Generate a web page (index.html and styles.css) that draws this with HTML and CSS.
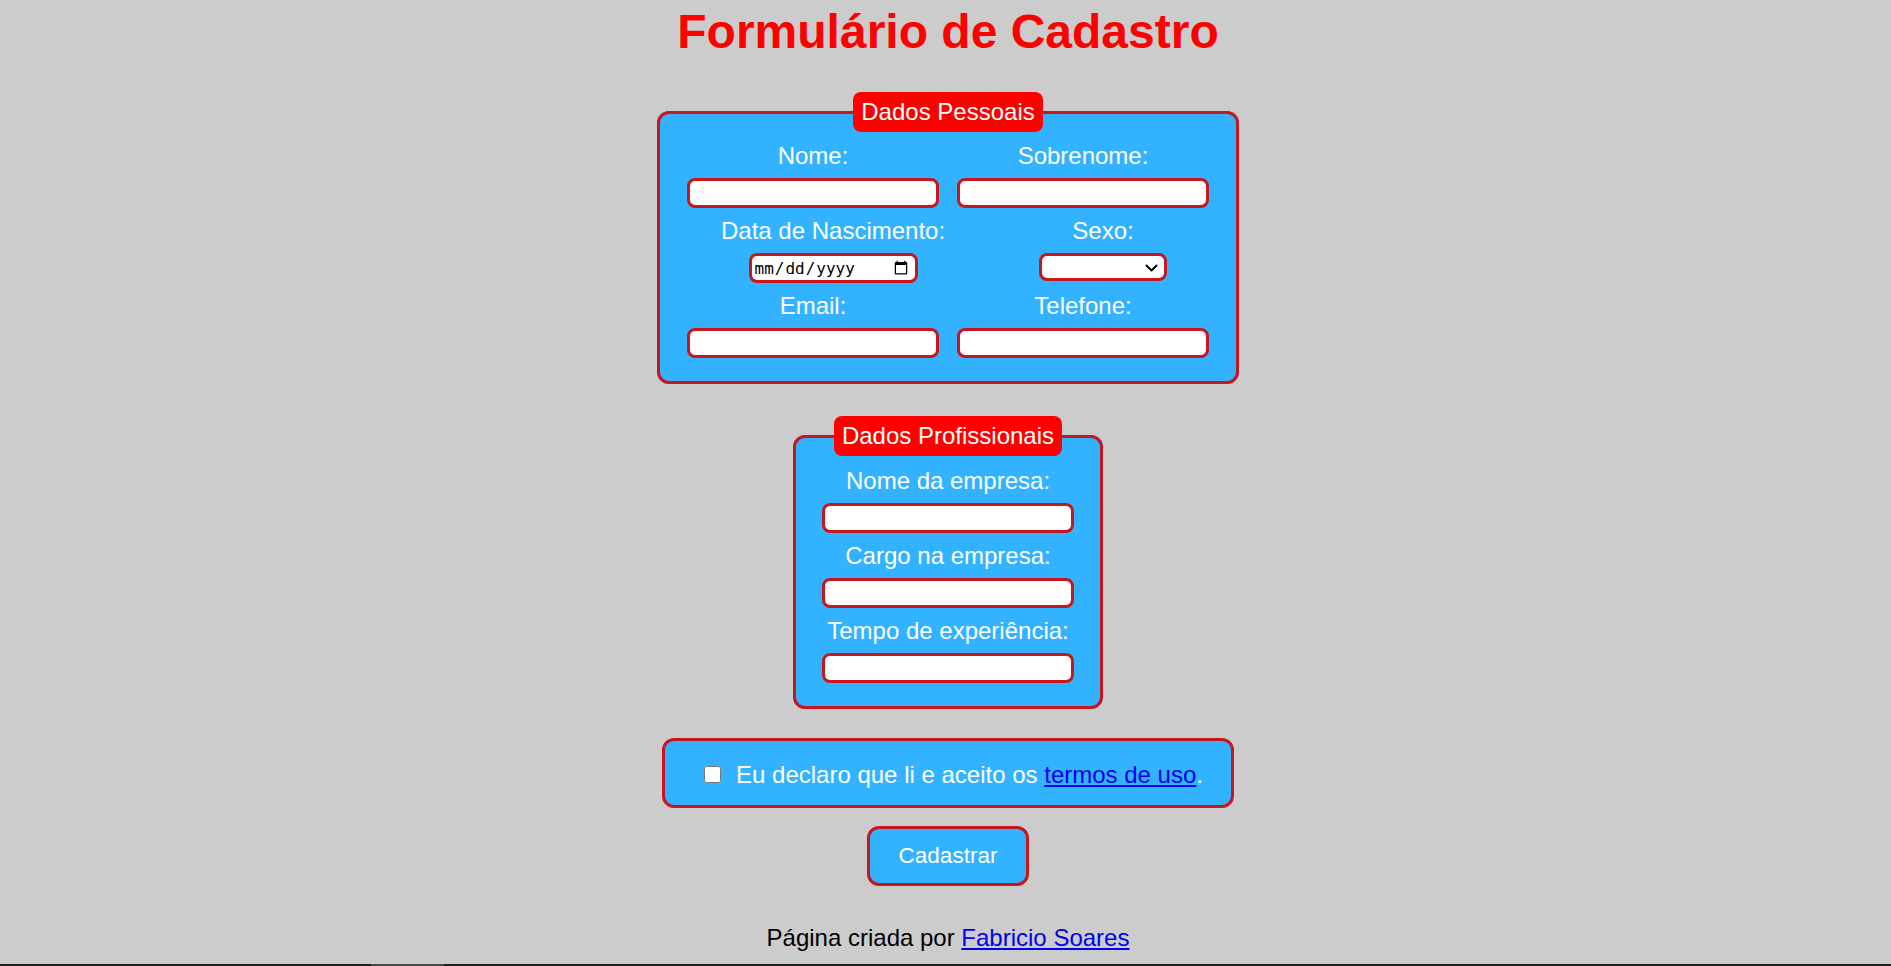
FILE: index.html
```html
<!DOCTYPE html>
<html lang="pt-BR">
<head>
<meta charset="utf-8">
<title>Formulário de Cadastro</title>
<link rel="stylesheet" href="styles.css">
</head>
<body>
<main class="page">
  <h1 class="title">Formulário de Cadastro</h1>
  <form class="form">
    <fieldset class="group group-personal">
      <legend class="group-legend">Dados Pessoais</legend>
      <div class="row">
        <div class="field"><label class="field-label" for="nome">Nome:</label><input class="text-input" id="nome" type="text"></div>
        <div class="field"><label class="field-label" for="sobrenome">Sobrenome:</label><input class="text-input" id="sobrenome" type="text"></div>
      </div>
      <div class="row">
        <div class="field"><label class="field-label" for="nasc">Data de Nascimento:</label><input class="text-input date-input" id="nasc" type="date"></div>
        <div class="field"><label class="field-label" for="sexo">Sexo:</label>
          <span class="select-wrap">
            <select class="text-input select-input" id="sexo"><option></option><option>Masculino</option><option>Feminino</option></select>
            <svg class="select-chevron" width="13" height="8" viewBox="0 0 13 8" aria-hidden="true"><path d="M1.5 1.5 L6.5 6.5 L11.5 1.5" fill="none" stroke="#000" stroke-width="2" stroke-linecap="round" stroke-linejoin="round"/></svg>
          </span>
        </div>
      </div>
      <div class="row">
        <div class="field"><label class="field-label" for="email">Email:</label><input class="text-input" id="email" type="email"></div>
        <div class="field"><label class="field-label" for="tel">Telefone:</label><input class="text-input" id="tel" type="tel"></div>
      </div>
    </fieldset>

    <fieldset class="group group-pro">
      <legend class="group-legend">Dados Profissionais</legend>
      <div class="field"><label class="field-label" for="empresa">Nome da empresa:</label><input class="text-input" id="empresa" type="text"></div>
      <div class="field"><label class="field-label" for="cargo">Cargo na empresa:</label><input class="text-input" id="cargo" type="text"></div>
      <div class="field"><label class="field-label" for="tempo">Tempo de experiência:</label><input class="text-input" id="tempo" type="text"></div>
    </fieldset>

    <div class="terms">
      <input class="terms-check" id="termos" type="checkbox">
      <label class="terms-label" for="termos">Eu declaro que li e aceito os <a href="#" class="link">termos de uso</a>.</label>
    </div>

    <button class="submit" type="button">Cadastrar</button>
  </form>
  <p class="footer">Página criada por <a href="#" class="link">Fabricio Soares</a></p>
</main>
<div class="taskbar-edge"><span class="taskbar-mark"></span></div>
</body>
</html>
```
FILE: styles.css
```css
html, body {
  margin: 0;
  background: #cccccc;
  font-family: "Liberation Sans", Arial, sans-serif;
}

.page {
  display: flex;
  flex-direction: column;
  align-items: center;
  padding-top: 4px;
  padding-left: 5px;
}

.title {
  margin: 0;
  font-size: 48px;
  line-height: 55px;
  font-weight: bold;
  color: #ff0000;
}

.form {
  display: flex;
  flex-direction: column;
  align-items: center;
  margin-top: 33px;
}

.group {
  margin: 0;
  min-width: 0;
  border: 3px solid #c8161e;
  border-radius: 12px;
  background: #33b3ff;
  padding: 8.4px 18px 16px;
  font-size: 24px;
  color: #ffffff;
}

.group-pro {
  margin-top: 32px;
}

.group-legend {
  margin: 0 auto;
  padding: 6px 8px;
  background: #ff0000;
  border-radius: 8px;
  color: #ffffff;
  font-size: 24px;
  line-height: normal;
}

.row {
  display: flex;
  justify-content: space-around;
  width: 540px;
}

.field {
  display: flex;
  flex-direction: column;
  align-items: center;
}

.field-label {
  padding-top: 2px;
  line-height: 28px;
  color: #ffffff;
}

.text-input {
  box-sizing: border-box;
  width: 252px;
  height: 30px;
  margin: 8px 8px 7px;
  padding: 1px 6px;
  border: 3px solid #c8161e;
  border-radius: 8px;
  background: #ffffff;
  font-family: "Liberation Sans", Arial, sans-serif;
  font-size: 16px;
  color: #000;
}

.date-input {
  width: 169px;
  padding: 0 4px 0 2px;
  font-family: "DejaVu Sans Mono", "Liberation Mono", monospace;
  font-size: 16px;
}

.select-wrap {
  position: relative;
  display: block;
}

.select-input {
  width: 128px;
  height: 28px;
  margin-bottom: 9px;
  padding: 0 4px;
  appearance: none;
  -webkit-appearance: none;
}

.select-chevron {
  position: absolute;
  top: 19px;
  right: 17px;
  pointer-events: none;
}

.terms {
  display: flex;
  align-items: center;
  margin-top: 29px;
  padding: 20px 28px 16px 39px;
  border: 3px solid #c8161e;
  border-radius: 12px;
  background: #33b3ff;
  font-size: 24px;
  line-height: normal;
  color: #ffffff;
}

.terms-check {
  width: 17px;
  height: 17px;
  margin: 0 15px 0 0;
}

.link {
  color: #0000ee;
  text-decoration: underline;
}

.submit {
  margin-top: 18px;
  padding: 14px 29px;
  border: 3px solid #c8161e;
  border-radius: 12px;
  background: #33b3ff;
  color: #ffffff;
  font-family: "Liberation Sans", Arial, sans-serif;
  font-size: 22.5px;
  line-height: normal;
}

.footer {
  margin: 38px 0 0;
  font-size: 24px;
  line-height: normal;
  color: #000000;
}

.taskbar-edge {
  position: fixed;
  left: 0;
  right: 0;
  bottom: 0;
  height: 2px;
  background: #1f1f1f;
}

.taskbar-mark {
  position: absolute;
  left: 371px;
  top: 0;
  width: 73px;
  height: 2px;
  background: #4a4a4a;
}
```
